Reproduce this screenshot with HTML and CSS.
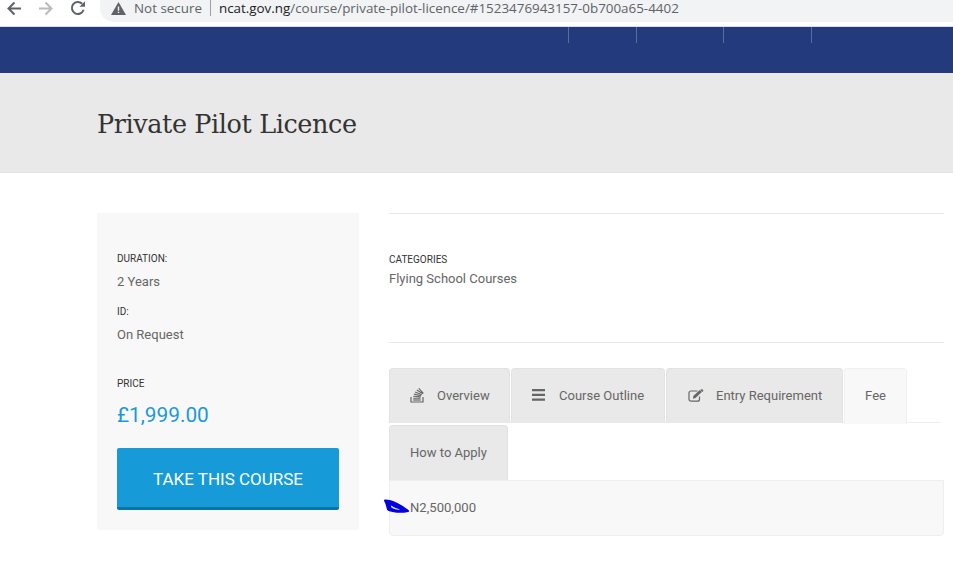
FILE: index.html
```html
<!DOCTYPE html>
<html lang="en">
<head>
<meta charset="utf-8">
<title>Private Pilot Licence</title>
<link rel="stylesheet" href="styles.css">
</head>
<body>
<header class="chrome">
  <svg class="nav-icon" width="16" height="16" viewBox="0 0 16 16"><path d="M15 8.500H3M8.500 2.500 2.500 8.500l6 6" fill="none" stroke="#5f6368" stroke-width="2"/></svg>
  <svg class="nav-icon" width="16" height="16" viewBox="0 0 16 16"><path d="M1 8.500h12M7.500 2.500l6 6-6 6" fill="none" stroke="#b8babd" stroke-width="2"/></svg>
  <svg class="nav-icon" width="16" height="16" viewBox="0 0 16 16"><path d="M13.600 9.800A6 6 0 1 1 12.200 3.800" fill="none" stroke="#5f6368" stroke-width="2"/><path d="M9.500 6.800H15V1.200z" fill="#5f6368"/></svg>
  <div class="omnibox">
    <svg class="warn" width="15" height="13" viewBox="0 0 15 13"><path d="M7.500 0 15 13H0z" fill="#5f6368"/><path d="M6.800 4.500h1.400v4.200H6.800zM6.800 9.700h1.400v1.400H6.800z" fill="#f1f3f4"/></svg>
    <span class="secure">Not secure</span>
    <span class="url"><span class="host">ncat.gov.ng</span>/course/private-pilot-licence/#1523476943157-0b700a65-4402</span>
  </div>
</header>
<nav class="navbar">
  <span class="nav-tick"></span><span class="nav-tick"></span><span class="nav-tick"></span><span class="nav-tick"></span>
</nav>
<section class="title-band"><h1>Private Pilot Licence</h1></section>
<main class="content">
  <aside class="sidebar">
    <div class="label">DURATION:</div>
    <div class="value">2 Years</div>
    <div class="label label-id">ID:</div>
    <div class="value">On Request</div>
    <div class="label label-price">PRICE</div>
    <div class="price">£1,999.00</div>
    <a class="cta" href="#">TAKE THIS COURSE</a>
  </aside>
  <div class="detail">
    <div class="categories">
      <div class="label">CATEGORIES</div>
      <div class="value">Flying School Courses</div>
    </div>
    <div class="tabs">
      <div class="tab-row">
        <div class="tab tab-overview">
          <svg class="tab-icon" width="14" height="16" viewBox="0 0 14 16"><path d="M1 10v5h12v-5" fill="none" stroke="#666" stroke-width="1.200"/><path d="M3.200 11.200h7.400M3.300 9.300l7.300.6M4 7.100l7.100 1.600M5.100 5l6.700 2.800M6.800 3l6 3.800M8.800 1.300l4.600 5" fill="none" stroke="#666" stroke-width="1.100"/><path d="M3.200 13h7.500" stroke="#666" stroke-width="1.200"/></svg>
          <span>Overview</span>
        </div>
        <div class="tab tab-outline">
          <svg class="tab-icon" width="13" height="12" viewBox="0 0 13 12"><path d="M0 0h13v2.200H0zM0 4.800h13V7H0zM0 9.600h13v2.200H0z" fill="#666"/></svg>
          <span>Course Outline</span>
        </div>
        <div class="tab tab-entry">
          <svg class="tab-icon" width="16" height="13" viewBox="0 0 16 13"><path d="M11.500 7.500v2.700a2 2 0 0 1-2 2H3a2 2 0 0 1-2-2V4a2 2 0 0 1 2-2h6.500" fill="none" stroke="#666" stroke-width="1.200"/><path d="M5.500 6.800 11.800 1l2 2L7.500 9l-2.700.7z" fill="#666"/><path d="M12.600.4l1.700-.2.900.9-.2 1.500-.6.500-2-2z" fill="#666"/></svg>
          <span>Entry Requirement</span>
        </div>
        <div class="tab tab-fee">Fee</div>
      </div>
      <div class="tab-row tab-row-second">
        <div class="tab tab-apply">How to Apply</div>
      </div>
      <div class="panel">
        <svg class="scribble" width="29" height="16" viewBox="0 0 29 16"><path d="M2 2.500C8 2 19 8 25 13 18 14.500 9 14 5 11.500 4 8 4 6 2 2.500z" fill="#0000e0" stroke="#0000e0" stroke-width="2" stroke-linejoin="round"/><path d="M8 7.500c3 2 6 3.300 9.500 4-3.500.5-7-.4-9.500-2.500z" fill="#e8e8fa"/></svg>
        <span>N2,500,000</span>
      </div>
    </div>
  </div>
</main>
</body>
</html>
```
FILE: styles.css
```css
* { box-sizing: border-box; }
html, body { margin: 0; padding: 0; }
body {
  width: 953px;
  height: 577px;
  overflow: hidden;
  background: #fff;
  font-family: Roboto, "Liberation Sans", sans-serif;
  color: #666;
}
.chrome {
  height: 27px;
  display: flex;
  align-items: flex-start;
  background: #fff;
  border-bottom: 1px solid #dadce0;
}
.nav-icon { flex: none; }
.nav-icon:nth-child(1) { margin-left: 6px; }
.nav-icon:nth-child(2) { margin-left: 16px; }
.nav-icon:nth-child(3) { margin-left: 16px; }
.omnibox {
  flex: 1;
  height: 22px;
  margin-left: 14px;
  padding-left: 11px;
  display: flex;
  align-items: flex-start;
  background: #f1f3f4;
  border-radius: 0 0 0 14px;
  font-family: "Open Sans", "Noto Sans", sans-serif;
  font-size: 13.4px;
  line-height: 16px;
  white-space: nowrap;
}
.warn { flex: none; margin-top: 2px; }
.secure { margin-left: 8px; color: #5f6368; padding-right: 8px; border-right: 1px solid #9aa0a6; }
.url { margin-left: 8px; color: #5f6368; }
.host { color: #202124; }
.navbar {
  height: 46px;
  background: #233a7d;
  display: flex;
  align-items: flex-start;
  padding-left: 568px;
}
.nav-tick { width: 1px; height: 16px; background: #5c6c9f; }
.nav-tick:nth-child(2) { margin-left: 67px; }
.nav-tick:nth-child(3) { margin-left: 86px; }
.nav-tick:nth-child(4) { margin-left: 87px; }
.title-band {
  height: 100px;
  background: #e9e9e9;
  border-bottom: 1px solid #e2e2e2;
  padding: 2px 0 0 97px;
  display: flex;
  align-items: center;
}
h1 {
  margin: 0;
  font-family: "DejaVu Serif", "Liberation Serif", serif;
  font-weight: 400;
  font-size: 25.5px;
  letter-spacing: -0.4px;
  color: #333;
}
.content {
  display: flex;
  padding: 40px 9px 0 97px;
  gap: 30px;
}
.sidebar {
  flex: none;
  width: 262px;
  height: 317px;
  background: #f8f8f8;
  padding: 40px 20px 0;
}
.label {
  font-size: 10px;
  line-height: 12px;
  color: #333;
}
.value {
  font-size: 13px;
  line-height: 16px;
  color: #666;
  margin-top: 9px;
}
.label-id { margin-top: 16px; }
.label-price { margin-top: 35px; }
.price {
  font-size: 20.8px;
  line-height: 26px;
  color: #1a9ad7;
  margin-top: 12px;
}
.cta {
  display: flex;
  align-items: center;
  justify-content: center;
  width: 222px;
  height: 62px;
  margin-top: 20px;
  padding-top: 2px;
  background: #169bd8;
  border-bottom: 3px solid #0c74a6;
  border-radius: 2px;
  color: #fff;
  font-size: 17px;
  font-weight: 400;
  text-decoration: none;
}
.detail { flex: 1; min-width: 0; }
.categories {
  height: 130px;
  border-top: 1px solid #e8e8e8;
  border-bottom: 1px solid #e8e8e8;
  padding-top: 40px;
}
.categories .value { margin-top: 5px; }
.tabs { margin-top: 25px; }
.tab-row {
  display: flex;
  gap: 1px;
  height: 55px;
  width: 552px;
  border-bottom: 1px solid #eee;
}
.tab-row-second { margin-top: 2px; width: auto; border-bottom: 0; }
.tab {
  height: 55px;
  padding-bottom: 2px;
  display: flex;
  align-items: center;
  font-size: 13px;
  background: #e9e9e9;
  border: 1px solid #e2e2e2;
  border-bottom: 0;
  border-radius: 4px 4px 0 0;
  color: #666;
}
.tab-icon { flex: none; }
.tab-overview { width: 121px; padding-left: 20px; gap: 13px; }
.tab-outline { width: 154px; padding-left: 20px; gap: 14px; }
.tab-entry { width: 177px; padding-left: 21px; gap: 12px; }
.tab-fee { width: 63px; justify-content: center; background: #f8f8f8; border-color: #f0f0f0; height: 56px; }
.tab-apply { width: 119px; justify-content: center; }
.panel {
  position: relative;
  height: 56px;
  background: #f8f8f8;
  border: 1px solid #eee;
  border-radius: 0 0 4px 4px;
  padding: 0 0 2px 20px;
  display: flex;
  align-items: center;
  font-size: 13.1px;
  color: #666;
}
.scribble { position: absolute; left: -7px; top: 17px; }
```
